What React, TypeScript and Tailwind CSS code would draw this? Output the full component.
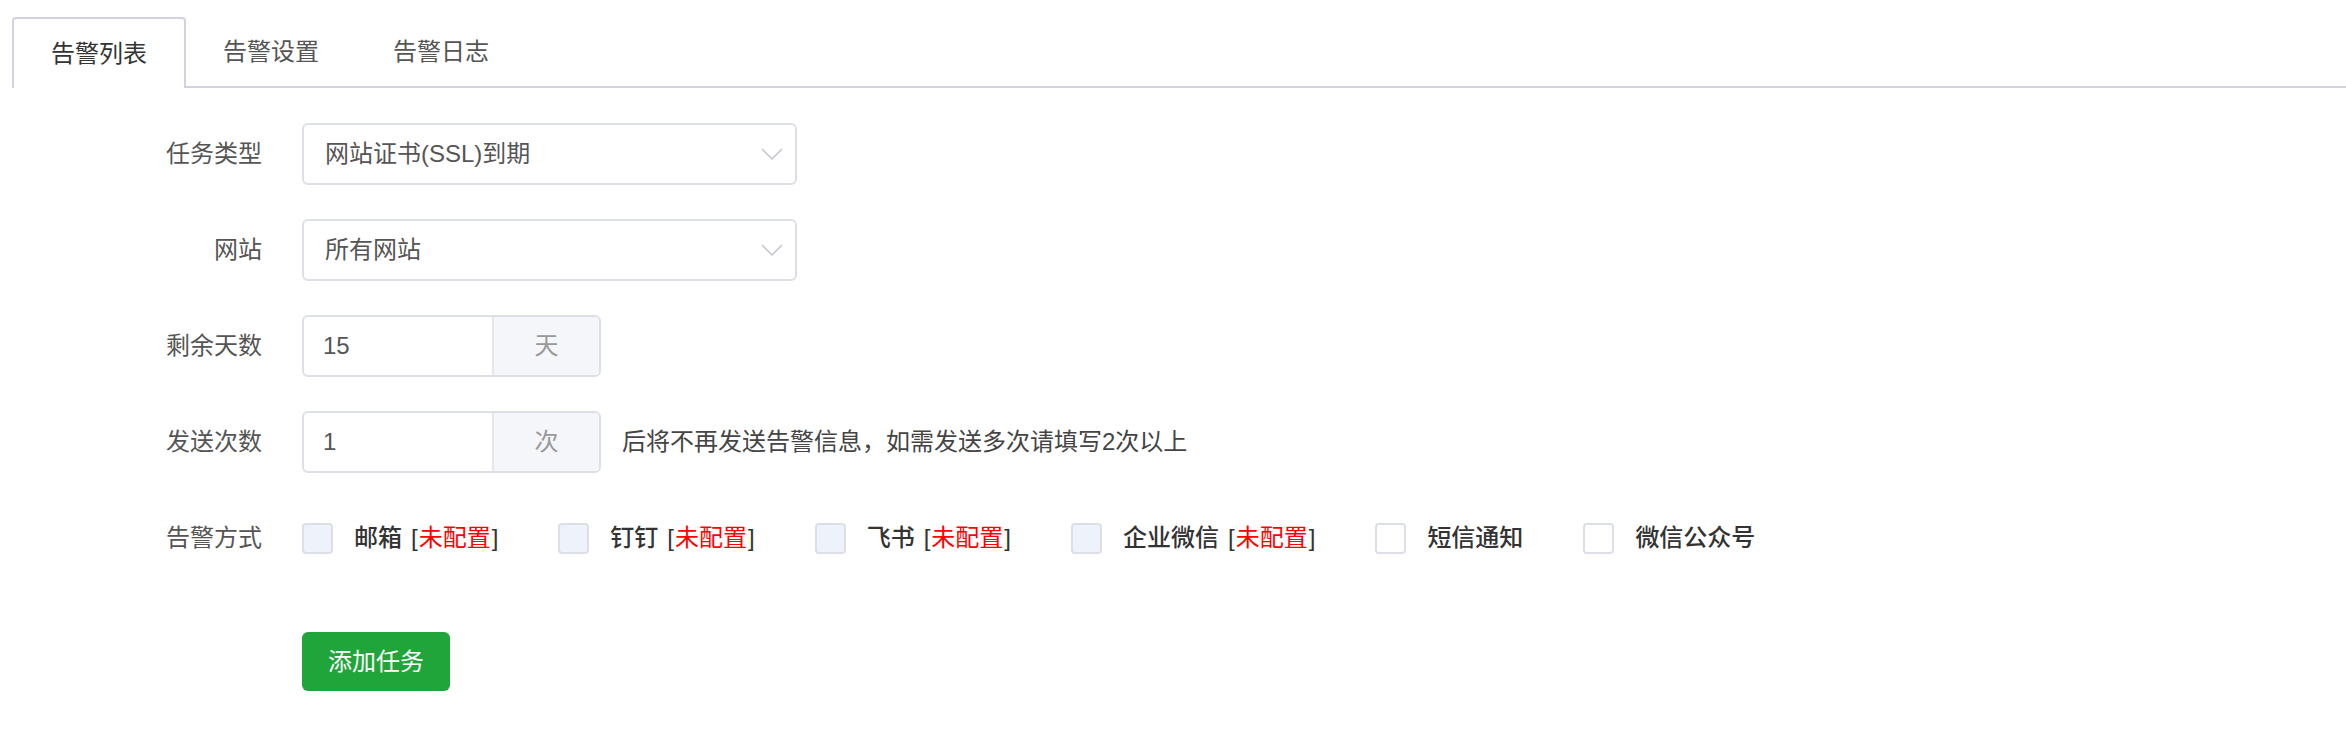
import React from "react";

const tabs = ["告警列表", "告警设置", "告警日志"];

const channels = [
  { name: "邮箱", configured: false, disabled: true },
  { name: "钉钉", configured: false, disabled: true },
  { name: "飞书", configured: false, disabled: true },
  { name: "企业微信", configured: false, disabled: true },
  { name: "短信通知", configured: true, disabled: false },
  { name: "微信公众号", configured: true, disabled: false },
];

function Chevron() {
  return (
    <svg width="22" height="12" viewBox="0 0 22 12" fill="none">
      <polyline points="1,1 11,11 21,1" stroke="#c0c4cc" strokeWidth="1.5" />
    </svg>
  );
}

function Row({ label, children }: { label: string; children: React.ReactNode }) {
  return (
    <div className="flex h-[62px] items-center">
      <div className="w-[250px] shrink-0 text-right text-[#555]">{label}</div>
      <div className="ml-[40px] flex items-center">{children}</div>
    </div>
  );
}

function Select({ value }: { value: string }) {
  return (
    <div className="flex h-[62px] w-[495px] items-center justify-between rounded-[6px] border-2 border-[#dcdfe6] bg-white pl-[21px] pr-[12px] text-[#555]">
      <span>{value}</span>
      <Chevron />
    </div>
  );
}

function UnitInput({ value, unit }: { value: string; unit: string }) {
  return (
    <div className="flex h-[62px] w-[299px] overflow-hidden rounded-[6px] border-2 border-[#dcdfe6] bg-white">
      <div className="flex flex-1 items-center pl-[19px] text-[#555]">{value}</div>
      <div className="flex w-[107px] items-center justify-center border-l-2 border-[#e4e6ec] bg-[#f5f6fa] text-[#999]">
        {unit}
      </div>
    </div>
  );
}

export default function App() {
  return (
    <div
      className="min-h-screen bg-white pl-[12px] pt-[17px] text-[24px] leading-none"
      style={{ fontFamily: '"Liberation Sans", "Noto Sans CJK SC", sans-serif' }}
    >
      {/* tabs */}
      <div className="flex h-[71px] border-b-2 border-[#d3d2e2]">
        {tabs.map((t, i) => (
          <div
            key={t}
            className={
              i === 0
                ? "-mb-[2px] flex h-[71px] items-center rounded-t-[4px] border-2 border-b-0 border-[#d3d2e2] bg-white px-[37px] text-[#333]"
                : "flex h-[69px] items-center border-2 border-transparent px-[35px] text-[#555]"
            }
          >
            {t}
          </div>
        ))}
      </div>

      <div className="mt-[35px] flex flex-col gap-[34px]">
        <Row label="任务类型">
          <Select value="网站证书(SSL)到期" />
        </Row>
        <Row label="网站">
          <Select value="所有网站" />
        </Row>
        <Row label="剩余天数">
          <UnitInput value="15" unit="天" />
        </Row>
        <Row label="发送次数">
          <UnitInput value="1" unit="次" />
          <span className="ml-[21px] text-[#444]">
            后将不再发送告警信息，如需发送多次请填写2次以上
          </span>
        </Row>
        <Row label="告警方式">
          <div className="flex items-center gap-[60px]">
            {channels.map((c) => (
              <label key={c.name} className="flex items-center">
                <span
                  className={
                    c.disabled
                      ? "h-[31px] w-[31px] rounded-[4px] border-2 border-[#dcdfe6] bg-[#eef2fb]"
                      : "h-[31px] w-[31px] rounded-[4px] border-2 border-[#dcdfe6] bg-white"
                  }
                />
                <span className="ml-[21px] flex items-center font-medium text-[#333]">
                  {c.name}
                  {!c.configured && (
                    <span className="ml-[9px]">
                      [<span className="mx-[1px] font-normal text-[#ff0000]">未配置</span>]
                    </span>
                  )}
                </span>
              </label>
            ))}
          </div>
        </Row>
      </div>

      <div className="ml-[290px] mt-[63px]">
        <button className="flex h-[59px] w-[148px] items-center justify-center rounded-[6px] bg-[#20a53a] text-white">
          添加任务
        </button>
      </div>
    </div>
  );
}
